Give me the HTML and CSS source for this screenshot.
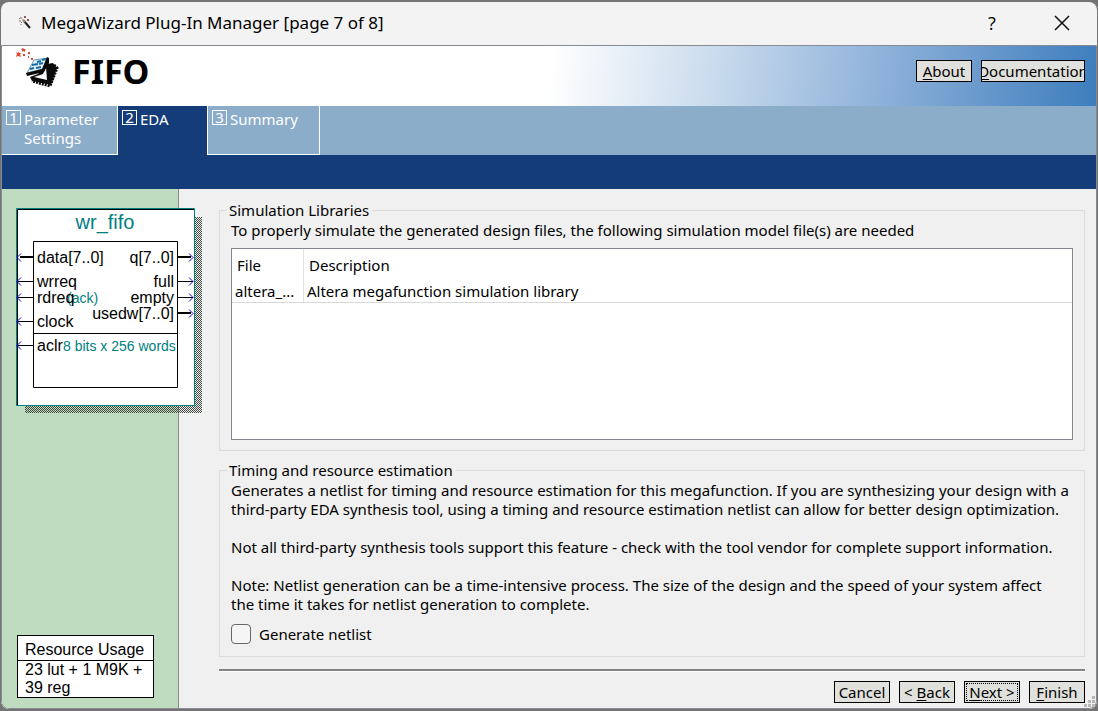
FILE: index.html
```
<!DOCTYPE html>
<html lang="en">
<head>
    <meta charset="UTF-8">
    <meta name="viewport" content="width=device-width, initial-scale=1.0">
    <title>MegaWizard Plug-In Manager</title>
    <link rel="stylesheet" href="styles.css">
</head>
<body>
    <div class="window">
        <div class="titlebar">
            <svg class="wand" width="14" height="14" viewBox="0 0 14 14">
                <path d="M6 5l6 7" stroke="#222" stroke-width="2"/>
                <path d="M5 4l2 2" stroke="#8a8a50" stroke-width="2"/>
                <g fill="#b9b0b4">
                    <rect x="2" y="1" width="2" height="2"/>
                    <rect x="1" y="4" width="2" height="2"/>
                    <rect x="4" y="3" width="2" height="1"/>
                    <rect x="2" y="8" width="2" height="1"/>
                </g>
                <g fill="#a0505a">
                    <rect x="6" y="0" width="2" height="2"/>
                    <rect x="1" y="2" width="1" height="1"/>
                    <rect x="9" y="3" width="2" height="2"/>
                    <rect x="3" y="6" width="1" height="1"/>
                </g>
            </svg>
            <div class="title">MegaWizard Plug-In Manager [page 7 of 8]</div>
            <button class="title-button" type="button" aria-label="Help">?</button>
            <button class="title-button" type="button" aria-label="Close">
                <svg width="16" height="16" viewBox="0 0 16 16"><path d="M1 1l14 14M15 1L1 15" stroke="#111" stroke-width="1.500"/></svg>
            </button>
        </div>

        <div class="frame">
            <div class="header">
                <svg class="logo" width="46" height="44" viewBox="0 0 46 44">
                    <g fill="#e04a30">
                        <path d="M2 3l1 2 3 0-2 1 1 3-3-1-2 1 1-3-1-2 2 1z"/>
                        <path d="M7 0l1 1 2 0-1 1 0 2-2-1-1 1 0-2-1-1z"/>
                        <rect x="7" y="6" width="2" height="2"/>
                        <rect x="12" y="4" width="2" height="2"/>
                        <rect x="12" y="8" width="1" height="2"/>
                        <rect x="15" y="10" width="2" height="2"/>
                    </g>
                    <path d="M31 16l6-1 4 5-6 17-19-4-2-4 8-3z" fill="#0a0a0a"/>
                    <path d="M38 17l3 3-7 18-18-5" fill="none" stroke="#0a0a0a" stroke-width="3" stroke-dasharray="2 1"/>
                    <path d="M30 19l1 13-13-3 9-3z" fill="#fff"/>
                    <path d="M18 12l14-2-5 11-16 4z" fill="#e2eef6" stroke="#6f9bb9"/>
                    <path d="M31 9l2 1 0 5-5 9-17 4-1-3 16-4z" fill="#0a0a0a"/>
                    <path d="M21 14l4-1M26 12l4-1M16 17l6-1M23 16l4-1M14 21l4-1M20 20l5-1" stroke="#146aa5" stroke-width="2"/>
                </svg>
                <h1>FIFO</h1>
                <div class="header-buttons">
                    <button class="btn" type="button"><span><u>A</u>bout</span></button>
                    <button class="btn btn-wide" type="button"><span><u>D</u>ocumentation</span></button>
                </div>
            </div>

            <div class="tabs">
                <button class="tab tab-settings" type="button"><span class="num">1</span><span>Parameter<br>Settings</span></button>
                <button class="tab tab-eda active" type="button"><span class="num">2</span><span>EDA</span></button>
                <button class="tab tab-summary" type="button"><span class="num">3</span><span>Summary</span></button>
            </div>
            <div class="subtabs"></div>

            <div class="body">
                <div class="sidebar">
                    <!-- block symbol of the FIFO -->
                    <svg class="symbol" width="187" height="206" viewBox="0 0 187 206">
                        <defs>
                            <pattern id="dither" width="2" height="2" patternUnits="userSpaceOnUse">
                                <rect width="1" height="1" fill="#404840"/>
                                <rect x="1" y="1" width="1" height="1" fill="#404840"/>
                            </pattern>
                        </defs>
                        <rect x="9" y="9" width="177" height="196" fill="url(#dither)" shape-rendering="crispEdges"/>
                        <rect x="1" y="1" width="178" height="197" fill="#fff"/>
                        <path d="M1.500 198V1.500H179" fill="none" stroke="#000"/>
                        <path d="M.5 198V.5H178.500V197.500H0" fill="none" stroke="#008080"/>
                        <text class="sym-title" x="89" y="21" text-anchor="middle">wr_fifo</text>
                        <path d="M17.500 33.500h144v146h-144zM17.500 125.500h144" fill="none" stroke="#000"/>
                        <path d="M2 73.500h15M2 89.500h15M2 113.500h15M2 137.500h15M162 73.500h15M162 89.500h15" stroke="#000"/>
                        <path d="M4 49h13M161 49h14M161 105h14" stroke="#000" stroke-width="2"/>
                        <path d="M5 45.500l-4 4 4 4M5 69.500l-4 4 4 4M5 85.500l-4 4 4 4M5 109.500l-4 4 4 4M5 133.500l-4 4 4 4M173 45.500l4 4-4 4M173 69.500l4 4-4 4M173 85.500l4 4-4 4M173 101.500l4 4-4 4" fill="none" stroke="#0000ff"/>
                        <g class="sym-note">
                            <text x="51" y="95">(ack)</text>
                            <text x="47" y="143">8 bits x 256 words</text>
                        </g>
                        <g class="sym-port">
                            <text x="21" y="55">data[7..0]</text>
                            <text x="21" y="79">wrreq</text>
                            <text x="21" y="95">rdreq</text>
                            <text x="21" y="119">clock</text>
                            <text x="21" y="143">aclr</text>
                        </g>
                        <g class="sym-port" text-anchor="end">
                            <text x="158" y="55">q[7..0]</text>
                            <text x="158" y="79">full</text>
                            <text x="158" y="95">empty</text>
                            <text x="158" y="111">usedw[7..0]</text>
                        </g>
                    </svg>

                    <div class="usage">
                        <div class="usage-title">Resource Usage</div>
                        <div class="usage-text">23 lut + 1 M9K + 39 reg</div>
                    </div>
                </div>

                <div class="main">
                    <fieldset class="group">
                        <legend>Simulation Libraries</legend>
                        <p>To properly simulate the generated design files, the following simulation model file(s) are needed</p>
                        <div class="list">
                            <table>
                                <thead>
                                    <tr><th class="col-file">File</th><th>Description</th></tr>
                                </thead>
                                <tbody>
                                    <tr><td>altera_...</td><td>Altera megafunction simulation library</td></tr>
                                </tbody>
                            </table>
                        </div>
                    </fieldset>

                    <fieldset class="group group-timing">
                        <legend>Timing and resource estimation</legend>
                        <p>Generates a netlist for timing and resource estimation for this megafunction. If you are synthesizing your design with a<br>third-party EDA synthesis tool, using a timing and resource estimation netlist can allow for better design optimization.</p>
                        <p>Not all third-party synthesis tools support this feature - check with the tool vendor for complete support information.</p>
                        <p>Note: Netlist generation can be a time-intensive process. The size of the design and the speed of your system affect<br>the time it takes for netlist generation to complete.</p>
                        <label class="check"><input type="checkbox">Generate netlist</label>
                    </fieldset>

                    <div class="footer">
                        <button class="btn" type="button"><span>Cancel</span></button>
                        <button class="btn" type="button"><span>&lt; <u>B</u>ack</span></button>
                        <button class="btn btn-default" type="button"><span><u>N</u>ext &gt;</span></button>
                        <button class="btn" type="button"><span><u>F</u>inish</span></button>
                    </div>
                </div>
            </div>
        </div>
        <svg class="grip" width="11" height="11" viewBox="0 0 11 11"><path d="M8 0h3v3h-3zM4 4h3v3h-3zM8 4h3v3h-3zM0 8h3v3h-3zM4 8h3v3h-3zM8 8h3v3h-3z" fill="#b8b8b8"/></svg>
    </div>
</body>
</html>
```

FILE: styles.css
```
* {
    box-sizing: border-box;
}
body {
    margin: 0;
    padding: 2px 1px;
    min-height: 100vh;
    display: flex;
    background: #747474;
    color: #000;
    font: 15px/19px "Noto Sans", Tahoma, sans-serif;
}
button {
    font: inherit;
    color: inherit;
    padding: 0;
    border: 0;
    background: none;
}
u {
    text-underline-offset: 2px;
}
.window {
    position: relative;
    flex: 1;
    display: flex;
    flex-direction: column;
    background: #f3f3f3;
    border-radius: 8px;
    overflow: hidden;
}
.titlebar {
    display: flex;
    align-items: center;
    height: 43px;
    padding: 0 0 2px 17px;
}
.title {
    flex: 1;
    margin-left: 9px;
    font-size: 17px;
    line-height: 24px;
}
.title-button {
    width: 70px;
    height: 40px;
    display: flex;
    align-items: center;
    justify-content: center;
    font: 18px/24px "Open Sans", "Segoe UI", sans-serif;
}
.frame {
    flex: 1;
    display: flex;
    flex-direction: column;
    border: 1px solid #868a92;
    border-radius: 0 0 8px 8px;
    background: #f0f0f0;
    overflow: hidden;
}
.header {
    display: flex;
    height: 60px;
    padding: 2px 11px 0 14px;
    background: linear-gradient(97deg, #fff 50%, #c9dbed 65%, #8fb2da 80%, #3d7dbd 100%);
}
h1 {
    flex: 1;
    margin: 0 0 0 10px;
    font-size: 34px;
    line-height: 46px;
}
.header-buttons {
    display: flex;
    gap: 9px;
    padding-top: 12px;
}
.btn {
    width: 56px;
    height: 22px;
    border: 1px solid #000;
    background: #e0e1dc;
    white-space: nowrap;
    overflow: hidden;
    display: flex;
    align-items: center;
    justify-content: center;
}
.btn-wide {
    width: 104px;
}
.btn-default {
    outline: 1px dotted #000;
    outline-offset: -3px;
}
.tabs {
    display: flex;
    height: 49px;
    background: #8cadca;
    color: #fff;
}
.tab {
    display: flex;
    align-items: flex-start;
    gap: 3px;
    padding: 4px 4px 0;
    text-align: left;
    border: 0 solid #fff;
}
.tab .num {
    width: 15px;
    height: 15px;
    border: 1px solid #fff;
    line-height: 13px;
    text-align: center;
}
.tab-settings {
    width: 116px;
    border-width: 0 1px 1px 0;
}
.tab-eda {
    width: 89px;
}
.tab-summary {
    width: 113px;
    border-width: 0 1px 1px 1px;
}
.active {
    background: #143c78;
}
.subtabs {
    height: 34px;
    background: #143c78;
}
.body {
    flex: 1;
    display: flex;
}
.sidebar {
    position: relative;
    width: 177px;
    flex-shrink: 0;
    display: flex;
    flex-direction: column;
    justify-content: space-between;
    align-items: flex-start;
    padding: 19px 0 10px 14px;
    border-right: 1px solid #8a8a8a;
    background: #c0dcc0;
    font-family: "Liberation Sans", Arial, sans-serif;
}
.symbol {
    flex-shrink: 0;
    overflow: visible;
}
.sym-title {
    font-size: 20px;
    fill: #008080;
}
.sym-port {
    font-size: 16px;
}
.sym-note {
    font-size: 14px;
    fill: #008080;
}
.usage {
    width: 137px;
    margin-left: 1px;
    border: 1px solid #000;
    background: #fff;
    font-size: 16px;
    line-height: 18px;
}
.usage-title {
    padding: 5px 7px 1px;
    border-bottom: 1px solid #000;
}
.usage-text {
    padding: 0 7px;
}
.main {
    flex: 1;
    display: flex;
    flex-direction: column;
    padding: 12px 11px 5px 40px;
}
.group {
    margin: 0;
    min-width: 0;
    padding: 1px 11px 10px;
    border: 1px solid #dcdcdc;
}
.group legend {
    margin-left: -4px;
    padding: 0 3px 0 2px;
}
.group p {
    margin: 0;
}
.group-timing {
    margin-top: 10px;
    padding-bottom: 12px;
}
.group-timing p {
    margin-bottom: 19px;
}
.group-timing p:last-of-type {
    margin-bottom: 10px;
}
.list {
    height: 192px;
    margin-top: 8px;
    border: 1px solid #828790;
    background: #fff;
}
table {
    width: 100%;
    border-collapse: separate;
    border-spacing: 0;
    table-layout: fixed;
}
th, td {
    text-align: left;
    font-weight: normal;
    white-space: nowrap;
}
th {
    height: 31px;
    padding: 2px 5px 0;
}
td {
    height: 23px;
    padding: 0 3px;
    border-bottom: 1px solid #d8d8d8;
}
th:first-child, td:first-child {
    border-right: 1px solid #e2e2e2;
}
.col-file {
    width: 72px;
}
.check {
    display: flex;
    align-items: center;
    gap: 8px;
    height: 20px;
}
.check input {
    appearance: none;
    width: 20px;
    height: 20px;
    margin: 0;
    border: 1px solid #666;
    border-radius: 4px;
    background: #f5f5f5;
}
.footer {
    display: flex;
    justify-content: flex-end;
    gap: 9px;
    margin-top: 12px;
    padding-top: 10px;
    border-top: 2px solid #848484;
    box-shadow: inset 0 1px 0 #fff;
}
/* resize handle sits over the window corner */
.grip {
    position: absolute;
    right: 2px;
    bottom: 2px;
}
```
